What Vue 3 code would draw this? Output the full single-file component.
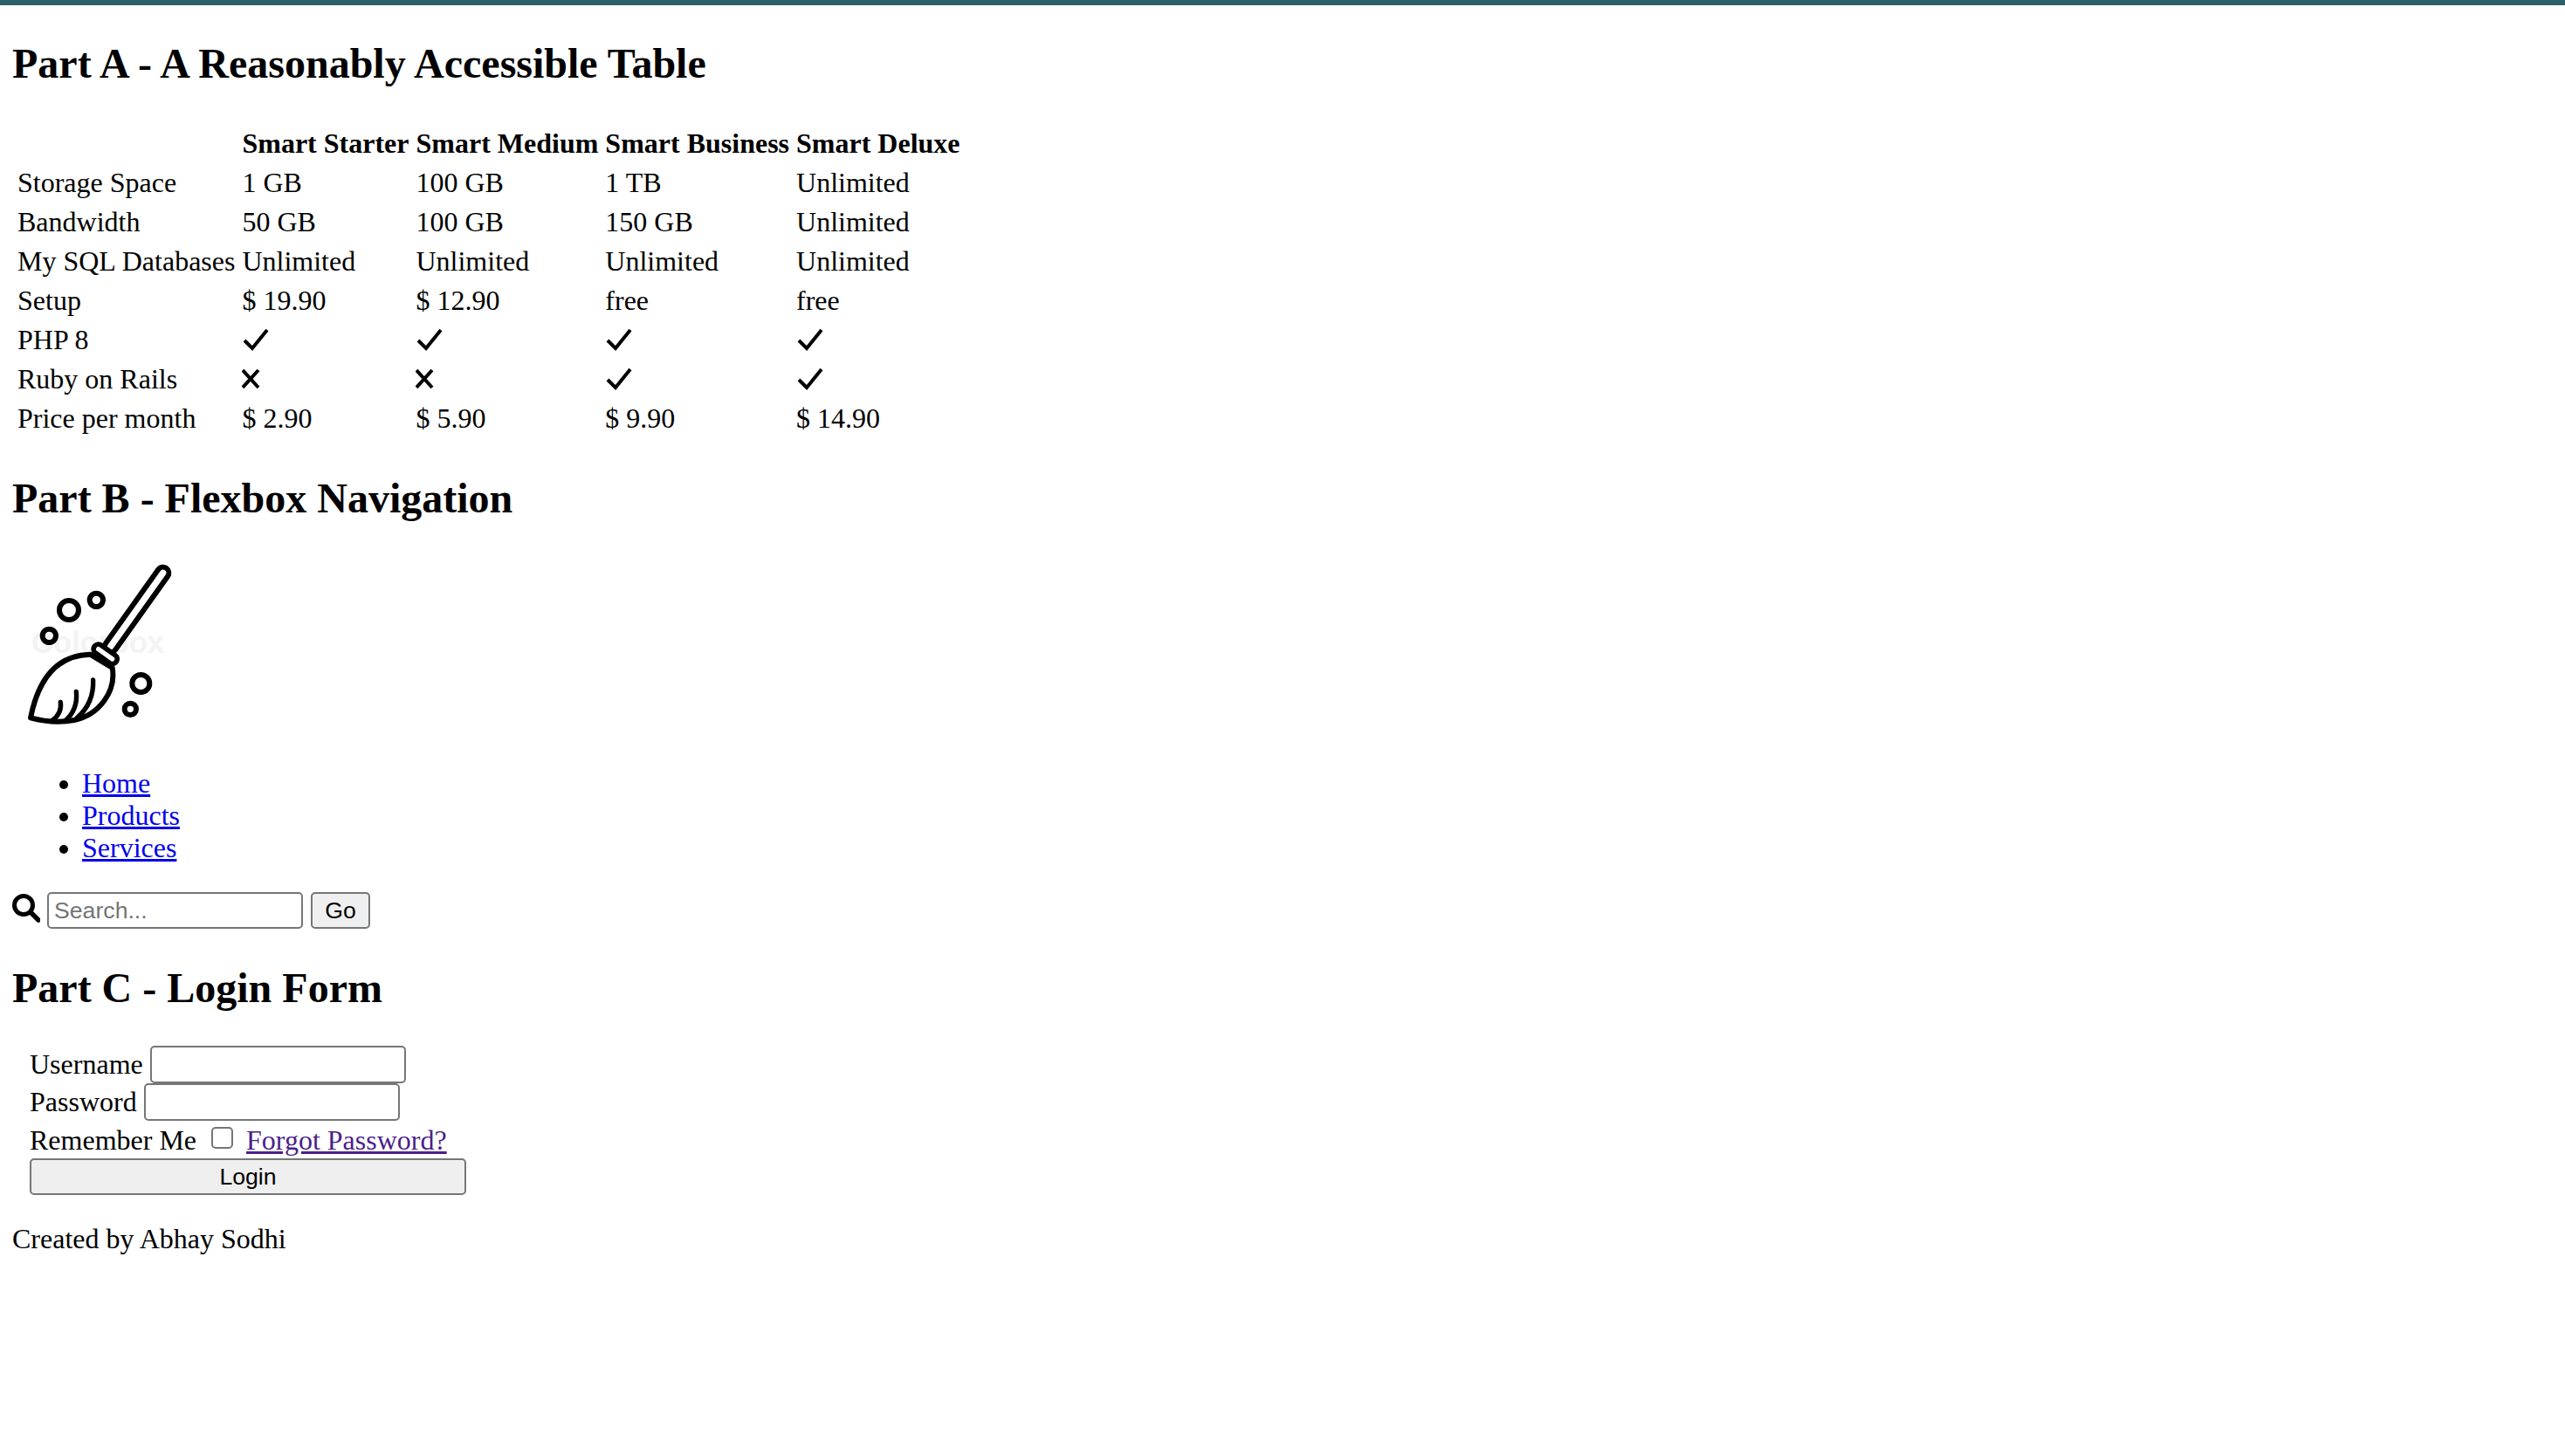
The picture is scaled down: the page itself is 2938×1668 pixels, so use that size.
<template>
  <div class="page">
    <h2>Part A - A Reasonably Accessible Table</h2>
    <table class="plans">
      <thead>
        <tr>
          <th></th>
          <th v-for="plan in plans" :key="plan">{{ plan }}</th>
        </tr>
      </thead>
      <tbody>
        <tr v-for="row in rows" :key="row.label">
          <td>{{ row.label }}</td>
          <td v-for="(cell, i) in row.cells" :key="i">
            <svg v-if="cell === 'yes'" class="mark" viewBox="0 0 32 30" aria-label="yes">
              <path d="M3 15 L12 24 L29 3" />
            </svg>
            <svg v-else-if="cell === 'no'" class="mark" viewBox="0 0 32 30" aria-label="no">
              <path d="M1 4 L19 24 M19 4 L1 24" />
            </svg>
            <template v-else>{{ cell }}</template>
          </td>
        </tr>
      </tbody>
    </table>

    <h2 class="part-b">Part B - Flexbox Navigation</h2>
    <svg class="logo" viewBox="45 30 600 600" aria-label="Broom logo">
      <text class="watermark" x="108" y="358">Colorbox</text>
      <g fill="none" stroke="#000" stroke-width="18">
        <circle cx="237" cy="210" r="33" />
        <circle cx="331" cy="175" r="23" />
        <circle cx="169" cy="298" r="23" />
        <circle cx="484" cy="462" r="30" />
        <circle cx="448" cy="550" r="20" />
        <path stroke-linejoin="round" d="M105 580 C125 480 175 365 310 362 L386 408 C400 490 340 570 255 588 C200 598 150 592 105 580 Z" />
        <path stroke-width="16" stroke-linecap="round" d="M208 526 C212 555 200 575 178 590 M262 490 C266 530 255 565 222 592 M320 450 C322 500 305 545 265 580" />
      </g>
      <line x1="380" y1="335" x2="560" y2="82" stroke="#000" stroke-width="58" stroke-linecap="round" />
      <line x1="380" y1="335" x2="560" y2="82" stroke="#fff" stroke-width="22" stroke-linecap="round" />
      <line x1="338" y1="344" x2="386" y2="378" stroke="#000" stroke-width="50" stroke-linecap="round" />
      <line x1="338" y1="344" x2="386" y2="378" stroke="#fff" stroke-width="16" stroke-linecap="round" />
    </svg>
    <ul class="nav">
      <li><a href="#">Home</a></li>
      <li><a href="#">Products</a></li>
      <li><a href="#">Services</a></li>
    </ul>
    <div class="search">
      <svg class="search-icon" viewBox="0 0 32 33" aria-label="search">
        <circle cx="13" cy="13" r="10.5" fill="none" stroke="#000" stroke-width="5" />
        <path d="M21 21 L30 30" stroke="#000" stroke-width="5.5" stroke-linecap="round" />
      </svg>
      <input class="field" type="text" placeholder="Search..." />
      <button class="btn go" type="button">Go</button>
    </div>

    <h2 class="part-c">Part C - Login Form</h2>
    <form class="login" @submit.prevent>
      <div class="line">
        <label>Username</label>
        <input class="field" type="text" />
      </div>
      <div class="line">
        <label>Password</label>
        <input class="field" type="password" />
      </div>
      <div class="line remember">
        <label>Remember Me</label>
        <span class="box"></span>
        <a class="visited" href="#">Forgot Password?</a>
      </div>
      <button class="btn wide" type="submit">Login</button>
    </form>
    <p class="credit">Created by Abhay Sodhi</p>
  </div>
</template>

<script setup>
const plans = ['Smart Starter', 'Smart Medium', 'Smart Business', 'Smart Deluxe'];

const rows = [
  { label: 'Storage Space', cells: ['1 GB', '100 GB', '1 TB', 'Unlimited'] },
  { label: 'Bandwidth', cells: ['50 GB', '100 GB', '150 GB', 'Unlimited'] },
  { label: 'My SQL Databases', cells: ['Unlimited', 'Unlimited', 'Unlimited', 'Unlimited'] },
  { label: 'Setup', cells: ['$ 19.90', '$ 12.90', 'free', 'free'] },
  { label: 'PHP 8', cells: ['yes', 'yes', 'yes', 'yes'] },
  { label: 'Ruby on Rails', cells: ['no', 'no', 'yes', 'yes'] },
  { label: 'Price per month', cells: ['$ 2.90', '$ 5.90', '$ 9.90', '$ 14.90'] },
];
</script>

<style>
html,
body {
  margin: 0;
  background: #fff;
}
</style>

<style scoped>
.page {
  border-top: 6px solid #2a6068;
  padding: 0 14px;
  min-height: 1662px;
  font-family: 'Liberation Serif', 'Times New Roman', serif;
  font-size: 32px;
  line-height: 37px;
  color: #000;
}

h2 {
  margin: 0;
  font-size: 48px;
  line-height: 52px;
  font-weight: bold;
}

.page > h2:first-child {
  padding-top: 41px;
}

.plans {
  margin-top: 41px;
  border-collapse: separate;
  border-spacing: 4px;
}

.plans th,
.plans td {
  padding: 2px;
  height: 37px;
  text-align: left;
  white-space: nowrap;
}

.mark {
  display: block;
  width: 32px;
  height: 30px;
  fill: none;
  stroke: #000;
  stroke-width: 4;
}

.part-b {
  margin-top: 41px;
}

.logo {
  display: block;
  width: 200px;
  height: 200px;
  margin-top: 42px;
  margin-left: 1px;
}

.watermark {
  font-family: 'Liberation Sans', Arial, sans-serif;
  font-size: 104px;
  font-weight: bold;
  fill: #f3f3f3;
}

.nav {
  margin: 40px 0 32px;
  padding-left: 80px;
}

.search {
  display: flex;
  align-items: center;
  gap: 9px;
}

.search-icon {
  width: 32px;
  height: 33px;
  margin-top: -6px;
  margin-right: -1px;
}

.field {
  box-sizing: border-box;
  width: 293px;
  height: 42px;
  padding: 2px 6px;
  border: 2px solid #767676;
  border-radius: 5px;
  background: #fff;
  font-family: 'Liberation Sans', Arial, sans-serif;
  font-size: 26.67px;
  outline: none;
}

.field::placeholder {
  color: #757575;
}

.btn {
  box-sizing: border-box;
  height: 42px;
  border: 2px solid #767676;
  border-radius: 5px;
  background: #efefef;
  color: #000;
  font-family: 'Liberation Sans', Arial, sans-serif;
  font-size: 26.67px;
  padding: 0;
}

.go {
  width: 68px;
}

.part-c {
  margin-top: 42px;
}

.login {
  margin-top: 40px;
  padding-left: 20px;
  display: flex;
  flex-direction: column;
  align-items: flex-start;
}

.line {
  display: flex;
  align-items: center;
  gap: 8px;
  height: 43px;
}

.line .field {
  height: 43px;
}

.remember {
  gap: 17px;
  height: 45px;
}

.box {
  box-sizing: border-box;
  width: 25px;
  height: 25px;
  border: 2px solid #767676;
  border-radius: 5px;
  margin-top: -6px;
}

.visited {
  color: #4b1f8a;
  margin-left: -2px;
}

.nav a {
  color: #0000ee;
}

.wide {
  width: 500px;
  margin-top: -2px;
}

.credit {
  margin: 32px 0 0;
}
</style>
